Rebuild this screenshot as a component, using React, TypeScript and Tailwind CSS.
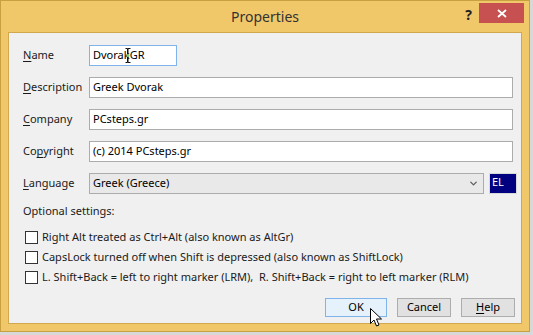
import { ChevronDown } from "lucide-react";

const font = { fontFamily: '"Noto Sans", "Open Sans", sans-serif' };

function Field({ label, value, wide = true, focused = false }: { label: [string, string, string]; value: string; wide?: boolean; focused?: boolean }) {
  return (
    <div className="flex h-[21px] items-center">
      <div className="w-[66px] text-[11px] text-[#1a1a1a]">
        {label[0]}
        <span className="underline underline-offset-2">{label[1]}</span>
        {label[2]}
      </div>
      <div
        className={
          "relative flex h-[21px] items-center border bg-white px-[3px] text-[11px] text-black " +
          (wide ? "w-[424px] " : "w-[88px] ") +
          (focused ? "border-[#7eb4ea]" : "border-[#acacac]")
        }
      >
        {value}
        {focused && (
          <svg className="absolute left-[35px] top-[2px]" width="6" height="15" viewBox="0 0 6 15">
            <path d="M0.5 0.5h2v14h-2M3 0.5h2.5M3 14.5h2.5M3 0.5v14" stroke="#111" strokeWidth="1" fill="none" />
            <circle cx="3" cy="7.5" r="1.5" fill="#7bd67b" />
          </svg>
        )}
      </div>
    </div>
  );
}

function Check({ text }: { text: string }) {
  return (
    <div className="flex h-[20px] items-center gap-[4px] text-[11px] text-[#1a1a1a]">
      <div className="h-[13px] w-[13px] border border-[#333] bg-white" />
      <span className="whitespace-pre">{text}</span>
    </div>
  );
}

export default function App() {
  return (
    <div className="h-[335px] w-[533px] overflow-hidden bg-[#d8d8d8]" style={font}>
      <div className="relative flex h-[332px] w-[530px] flex-col border border-[#c9a040] bg-[#f0c86a] px-[7px] pb-[7px]">
        {/* title bar */}
        <div className="relative flex h-[31px] items-center justify-center">
          <span className="text-[14px] text-[#333]">Properties</span>
          <span className="absolute right-[50px] top-[3px] text-[14px] font-bold text-[#222]">?</span>
          <div className="absolute right-[-2px] top-[2px] flex h-[20px] w-[45px] items-center justify-center bg-[#c75050]">
            <svg width="10" height="9" viewBox="0 0 10 9">
              <path d="M1 1l8 7M9 1l-8 7" stroke="white" strokeWidth="1.8" />
            </svg>
          </div>
        </div>
        {/* client */}
        <div className="relative flex flex-1 flex-col border border-[#d1a84f] bg-[#f0f0f0] pl-[14px] pt-[12px]">
          <div className="flex flex-col gap-[11px]">
            <Field label={["", "N", "ame"]} value="DvorakGR" wide={false} focused />
            <Field label={["", "D", "escription"]} value="Greek Dvorak" />
            <Field label={["", "C", "ompany"]} value="PCsteps.gr" />
            <Field label={["Co", "p", "yright"]} value="(c) 2014 PCsteps.gr" />
            <div className="flex h-[21px] items-center">
              <div className="w-[66px] text-[11px] text-[#1a1a1a]">
                <span className="underline underline-offset-2">L</span>anguage
              </div>
              <div className="flex h-[21px] w-[395px] items-center justify-between border border-[#acacac] bg-[#e9e9e9] pl-[3px] pr-[4px] text-[11px] text-black">
                Greek (Greece)
                <ChevronDown size={11} strokeWidth={3} color="#606060" />
              </div>
              <div className="ml-[5px] h-[21px] w-[28px] border border-[#d8d8d8] bg-[#000080] pl-[2px] text-[11px] leading-[15px] text-white">
                EL
              </div>
            </div>
          </div>
          <div className="mt-[9px] text-[11px] text-[#1a1a1a]">Optional settings:</div>
          <div className="ml-[2px] mt-[8px] flex flex-col">
            <Check text="Right Alt treated as Ctrl+Alt (also known as AltGr)" />
            <Check text="CapsLock turned off when Shift is depressed (also known as ShiftLock)" />
            <Check text="L. Shift+Back = left to right marker (LRM),  R. Shift+Back = right to left marker (RLM)" />
          </div>
          <div className="mt-auto mb-[6px] mr-[6px] flex justify-end gap-[10px] text-[11px] text-black">
            <div className="flex h-[19px] w-[62px] items-center justify-center border border-[#7eb4ea] bg-[#e5f1fb]">OK</div>
            <div className="flex h-[19px] w-[54px] items-center justify-center border border-[#adadad] bg-[#e1e1e1]">Cancel</div>
            <div className="flex h-[19px] w-[54px] items-center justify-center border border-[#adadad] bg-[#e1e1e1]">
              <span className="underline underline-offset-2">H</span>elp
            </div>
          </div>
          <svg className="absolute left-[361px] top-[275px]" width="13" height="20" viewBox="0 0 13 20">
            <path d="M0.5 0.5v15l3.5-3.5 2.5 6 2.5-1-2.5-6h5z" fill="white" stroke="black" strokeWidth="1" />
          </svg>
        </div>
      </div>
    </div>
  );
}
